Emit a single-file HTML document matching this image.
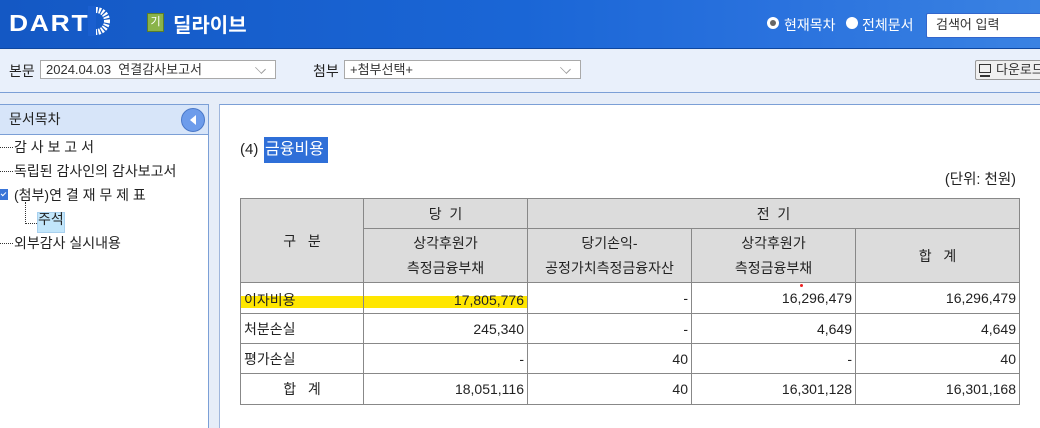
<!DOCTYPE html>
<html><head><meta charset="utf-8">
<style>
*{margin:0;padding:0;box-sizing:border-box}
body{width:1040px;height:428px;overflow:hidden;background:#e6edf8;font-family:"Liberation Sans","Noto Sans CJK KR",sans-serif;font-size:14px;color:#222;position:relative}
.abs{position:absolute}
#hdr{left:0;top:0;width:1040px;height:49px;background:linear-gradient(90deg,#1458c4 0%,#1a66d6 50%,#2a72de 75%,#3a82e2 100%);border-bottom:1px solid #0e47a0}
#tb{left:0;top:50px;width:1040px;height:43px;background:#e9f0fb;border-bottom:1px solid #7b9fd6}
.sel{background:#fff;border:1px solid #a9a9a9;height:19px;font-size:13px;line-height:17px;padding-left:5px;color:#333}
.chev{position:absolute;right:10px;top:3px;width:9px;height:9px;border-right:1px solid #999;border-bottom:1px solid #999;transform:rotate(45deg) scale(1,0.7)}
#side{left:0;top:104px;width:209px;height:324px;background:#fff;border-right:1px solid #7b9fd6;border-top:1px solid #7b9fd6}
#sideh{left:0;top:0;width:208px;height:30px;background:#d7e5f9;border-bottom:1px solid #7b9fd6;font-size:14px;line-height:29px;padding-left:9px;color:#222}
#cont{left:219px;top:104px;width:821px;height:324px;background:#fff;border-left:1px solid #9fb6dc;border-top:1px solid #7b9fd6}
.tr{position:absolute;font-size:14px;white-space:nowrap}
.dot{position:absolute;border-top:1px dotted #333}
table{border-collapse:collapse;position:absolute;left:240px;top:198px;width:780px;font-size:14px}
td{border:1px solid #888;height:30px;padding:0 3px;text-align:right}
th{border:1px solid #888;background:#dcdcdc;font-weight:normal;text-align:center;color:#222}
table{border:1.5px solid #222}
.l{text-align:left}
.c{text-align:center}
</style></head><body>
<div id="hdr" class="abs">
  <div class="abs" style="left:9px;top:10px;color:#fff;font-weight:bold;font-size:23px;letter-spacing:1.5px;font-family:'Liberation Sans',sans-serif;transform:scaleX(1.15);transform-origin:left">DART</div>
  <svg class="abs" style="left:88px;top:6px" width="24" height="30" viewBox="0 0 24 30"><circle cx="8" cy="15" r="11" fill="none" stroke="#fff" stroke-width="6" stroke-dasharray="2 1.2"/><rect x="0" y="0" width="8" height="30" fill="#1a5fcf"/></svg>
  <div class="abs" style="left:147px;top:13px;width:17px;height:19px;background:#8ab34a;border:1px solid #5a7d2a;color:#fff;font-size:11px;text-align:center;line-height:17px">기</div>
  <div class="abs" style="left:173px;top:9px;color:#fff;font-size:20px;font-weight:bold">딜라이브</div>
  <div class="abs" style="left:767px;top:17px;width:12px;height:12px;border-radius:50%;background:#fff;"><div style="margin:3px;width:6px;height:6px;border-radius:50%;background:#666"></div></div>
  <div class="abs" style="left:784px;top:15px;color:#fff;font-size:14px">현재목차</div>
  <div class="abs" style="left:846px;top:17px;width:12px;height:12px;border-radius:50%;background:#fff"></div>
  <div class="abs" style="left:862px;top:15px;color:#fff;font-size:14px">전체문서</div>
  <div class="abs" style="left:926px;top:13px;width:120px;height:25px;background:#fff;border:1px solid #3366cc;border-radius:2px;font-size:13px;line-height:22px;padding-left:9px;color:#333">검색어 입력</div>
</div>
<div id="tb" class="abs">
  <div class="abs" style="left:9px;top:11px;font-size:14px;color:#222">본문</div>
  <div class="abs sel" style="left:40px;top:10px;width:236px">2024.04.03 &nbsp;연결감사보고서<span class="chev"></span></div>
  <div class="abs" style="left:313px;top:11px;font-size:14px;color:#222">첨부</div>
  <div class="abs sel" style="left:344px;top:10px;width:237px">+첨부선택+<span class="chev"></span></div>
  <div class="abs" style="left:975px;top:10px;width:70px;height:20px;background:#f0f0f0;border:1px solid #999;border-radius:2px;font-size:13px;line-height:18px;padding-left:20px;color:#333">다운로드
    <div class="abs" style="left:3px;top:3px;width:12px;height:9px;border:1.5px solid #333"></div><div class="abs" style="left:4px;top:14px;width:10px;height:1.5px;background:#333"></div></div>
</div>
<div id="side" class="abs">
  <div id="sideh" class="abs">문서목차</div>
  <div class="abs" style="left:181px;top:3px;width:24px;height:24px;border-radius:50%;background:#6d9ceb;border:1px solid #4a78c8"><div style="position:absolute;left:8px;top:6px;border-right:6px solid #fff;border-top:5px solid transparent;border-bottom:5px solid transparent"></div></div>
  <div class="dot" style="left:0;top:42px;width:13px"></div><div class="tr" style="left:14px;top:32px">감 사 보 고 서</div>
  <div class="dot" style="left:0;top:66px;width:13px"></div><div class="tr" style="left:14px;top:56px">독립된 감사인의 감사보고서</div>
  <div class="abs" style="left:0;top:84px;width:8px;height:11px;background:#3a75d8"><div style="position:absolute;left:1px;top:3px;width:5px;height:3px;border-left:1.5px solid #fff;border-bottom:1.5px solid #fff;transform:rotate(-45deg)"></div></div><div class="tr" style="left:14px;top:80px">(첨부)연 결 재 무 제 표</div>
  <div class="abs" style="left:25px;top:97px;height:22px;border-left:1px dotted #333"></div>
  <div class="dot" style="left:25px;top:118px;width:12px"></div>
  <div class="abs" style="left:37px;top:107px;width:28px;height:21px;background:#c2e6fb;border:1px solid #a8d0ee"></div><div class="tr" style="left:38px;top:104px">주석</div>
  <div class="dot" style="left:0;top:138px;width:13px"></div><div class="tr" style="left:14px;top:128px">외부감사 실시내용</div>
</div>
<div id="cont" class="abs"></div>
<div class="abs" style="left:240px;top:141px;font-size:15px;color:#222">(4)</div>
<div class="abs" style="left:264px;top:137px;width:64px;height:26px;background:#2f6fd8;color:#fff;font-size:16px;line-height:26px;padding-left:1px">금융비용</div>
<div class="abs" style="left:932px;top:168px;width:84px;text-align:right;font-size:14.5px">(단위: 천원)</div>
<div class="abs" style="left:241px;top:296px;width:286px;height:12px;background:#ffe600"></div>
<table>
<colgroup><col style="width:123px"><col style="width:164px"><col style="width:164px"><col style="width:164px"><col style="width:164px"></colgroup>
<tr style="height:30px"><th rowspan="2">구 &nbsp; 분</th><th>당 &nbsp;기</th><th colspan="3">전 &nbsp;기</th></tr>
<tr style="height:54px"><th style="line-height:25px">상각후원가<br>측정금융부채</th><th style="line-height:25px">당기손익-<br>공정가치측정금융자산</th><th style="line-height:25px">상각후원가<br>측정금융부채</th><th>합 &nbsp; 계</th></tr>
<tr style="height:31px"><td class="l" style="position:relative;padding-top:3px">이자비용</td><td style="padding-top:3px">17,805,776</td><td>-</td><td style="position:relative">16,296,479<span style="position:absolute;left:108px;top:1px;width:3px;height:3px;border-radius:50%;background:#e22"></span></td><td>16,296,479</td></tr>
<tr style="height:30px"><td class="l">처분손실</td><td>245,340</td><td>-</td><td>4,649</td><td>4,649</td></tr>
<tr style="height:30px"><td class="l">평가손실</td><td>-</td><td>40</td><td>-</td><td>40</td></tr>
<tr style="height:31px"><td class="c">합 &nbsp; 계</td><td>18,051,116</td><td>40</td><td>16,301,128</td><td>16,301,168</td></tr>
</table>
</body></html>
